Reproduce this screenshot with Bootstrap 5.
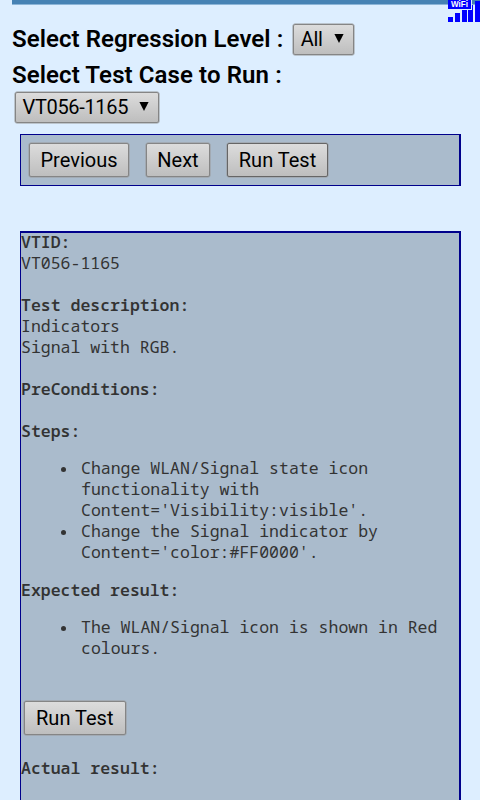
<!DOCTYPE html>
<html lang="en">
<head>
<meta charset="utf-8">
<meta name="viewport" content="width=device-width, initial-scale=1">
<title>Regression tests</title>
<link href="https://cdn.jsdelivr.net/npm/bootstrap@5.3.0/dist/css/bootstrap.min.css" rel="stylesheet">
<style>
  body { background: #def; color: #000; font-family: Roboto, "Liberation Sans", sans-serif; height: 800px; }
  .top-rule { height: 5px; margin-left: 12px; background: #4682b4; border-bottom: 1px solid #8bb4d7; }
  .signal { position: absolute; top: 0; right: 0; width: 32px; height: 22px; }
  .picker { margin: 16px 0 0 12px; }
  .picker-label { font-size: 24px; line-height: 36px; font-weight: 600; letter-spacing: .07px; white-space: nowrap; }
  .second-label { margin-left: 12px; letter-spacing: .1px; }
  .ctl { font-family: Roboto, sans-serif; font-size: 20px; font-weight: 400; line-height: 1; color: #000; border: 1px solid #858585; border-radius: 2px; background: linear-gradient(#dcdcdc, #bebebe); padding: 0; box-shadow: 0 0 0 .5px #999; white-space: nowrap; }
  .pick { height: 31px; padding: 0 9px 1px 6.5px; letter-spacing: -.33px; }
  .pick svg { width: 10px; height: 9px; margin-top: -1px; }
  .level { width: 61px; margin-left: 10px; }
  .case { width: 143.5px; margin: -1px 0 0 15px; }
  .toolbar { margin: 11px 19px 0 20px; height: 52px; background: #abc; border: 1px solid #00008b; border-right-width: 2px; padding: 8px; }
  .push { height: 34px; padding-bottom: 1px; }
  .prev { width: 100px; }
  .next { width: 64px; margin-left: 17px; }
  .run { width: 101px; }
  .toolbar .run { margin-left: 17px; border-color: #666; }
  .report { margin: 45px 19px 0 20px; height: 569px; background: #abc; color: #333; border: 1px solid #00008b; border-width: 2px 2px 0 1px; font-family: "Droid Sans Mono", "Noto Sans Mono", "DejaVu Sans Mono", monospace; font-size: 16.5px; line-height: 21px; }
  .report-body { margin-top: -2px; }
  .report-body h2 { font-size: 16.5px; line-height: 21px; font-weight: 600; margin: 0; }
  .report ul { padding-left: 60px; margin: 16px 0 17px; list-style: none; }
  .report li { white-space: nowrap; position: relative; }
  .report li::before { content: ""; position: absolute; left: -20px; top: 10px; width: 5px; height: 5px; border-radius: 50%; background: #333; }
  .report .run { display: block; width: 101.5px; margin: 43px 0 22px 3px; }
</style>
<script src="https://cdn.jsdelivr.net/npm/bootstrap@5.3.0/dist/js/bootstrap.bundle.min.js"></script>
</head>
<body class="overflow-hidden">
  <div class="top-rule"></div>
  <svg class="signal" viewBox="0 0 32 22" shape-rendering="crispEdges" aria-label="WiFi signal">
    <path fill="#00f" d="M0 17h5v5H0zM7 13h5v9H7zM14 9h5v13h-5zM20 5h5v17h-5zM27 1h5v21h-5z"/>
    <path fill="#def" d="M0 0h24v10H0z"/>
    <path fill="#00f" d="M0 0h23v9H0z"/>
    <text x="3" y="7.4" fill="#fff" font-family="Liberation Sans" font-weight="700" font-size="8.5" textLength="17" lengthAdjust="spacingAndGlyphs">WiFi</text>
  </svg>
  <div class="picker d-flex align-items-center">
    <span class="picker-label">Select Regression Level :</span>
    <button class="ctl pick level d-flex align-items-center justify-content-between">All <svg viewBox="0 0 10 9"><path d="M.4 0h9.2L5 9z"/></svg></button>
  </div>
  <div class="picker-label second-label">Select Test Case to Run :</div>
  <button class="ctl pick case d-flex align-items-center justify-content-between">VT056-1165 <svg viewBox="0 0 10 9"><path d="M.4 0h9.2L5 9z"/></svg></button>
  <div class="toolbar d-flex align-items-start">
    <button class="ctl push prev">Previous</button>
    <button class="ctl push next">Next</button>
    <button class="ctl push run">Run Test</button>
  </div>
  <div class="report"><div class="report-body">
    <h2>VTID:</h2>
    <div>VT056-1165</div><br>
    <h2>Test description:</h2>
    <div>Indicators<br>Signal with RGB.</div><br>
    <h2>PreConditions:</h2><br>
    <h2>Steps:</h2>
    <ul>
      <li>Change WLAN/Signal state icon<br>functionality with<br>Content='Visibility:visible'.</li>
      <li>Change the Signal indicator by<br>Content='color:#FF0000'.</li>
    </ul>
    <h2>Expected result:</h2>
    <ul class="mb-0">
      <li>The WLAN/Signal icon is shown in Red<br>colours.</li>
    </ul>
    <button class="ctl push run">Run Test</button>
    <h2>Actual result:</h2>
  </div></div>
</body>
</html>
